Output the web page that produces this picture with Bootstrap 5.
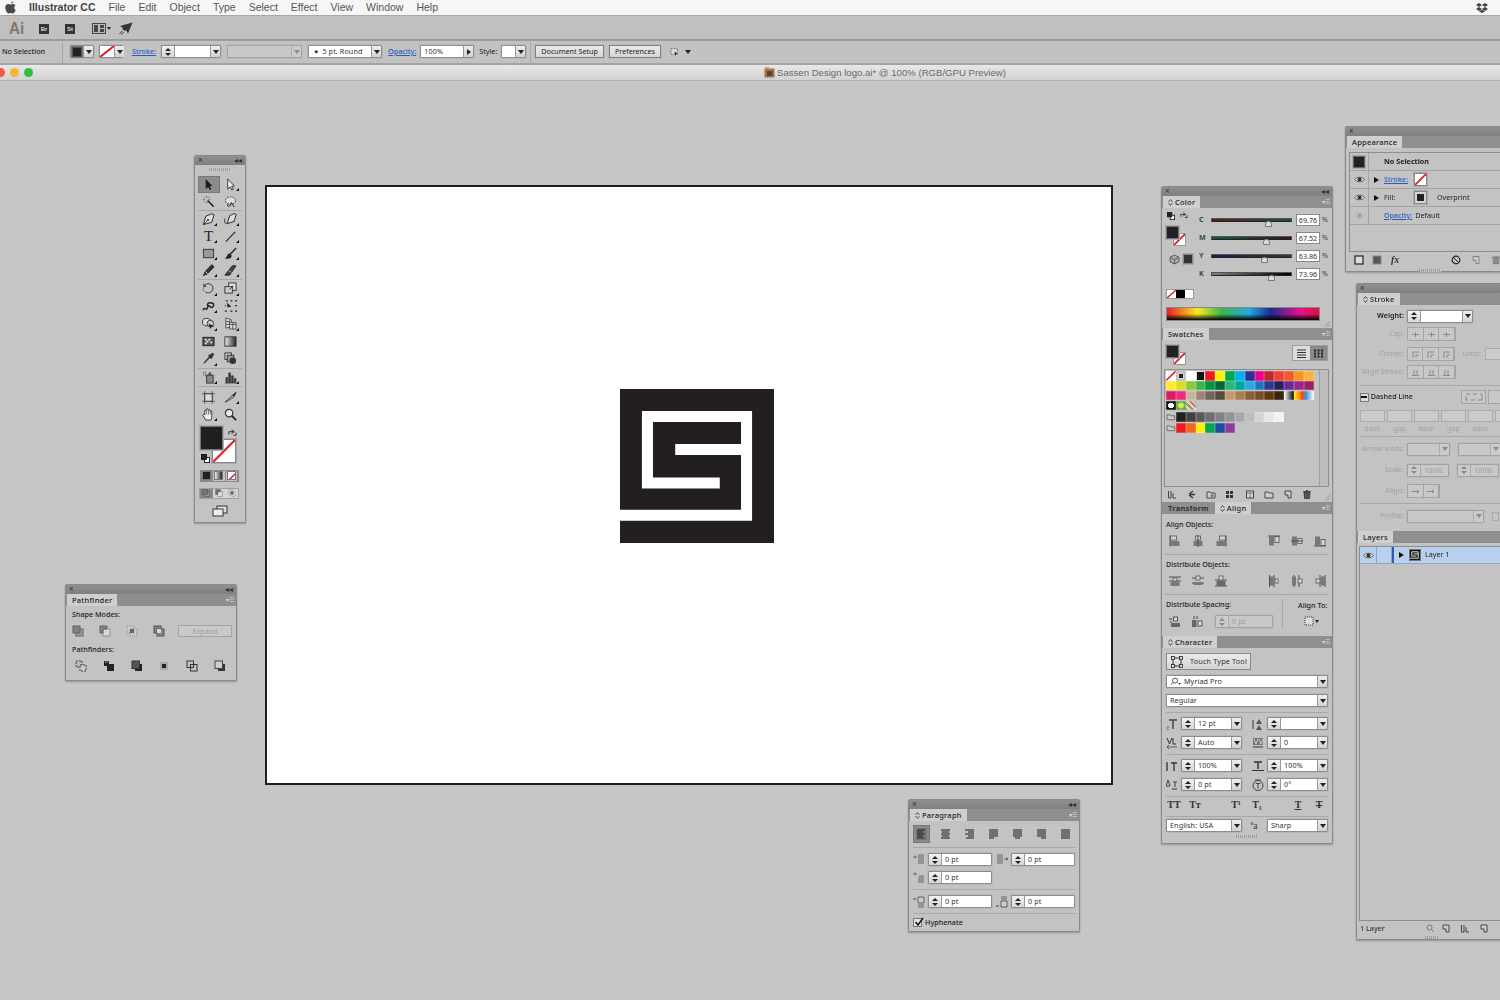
<!DOCTYPE html>
<html lang="en"><head><meta charset="utf-8"><title>Illustrator CC</title>
<link href="https://cdn.jsdelivr.net/npm/bootstrap@5.3.0/dist/css/bootstrap.min.css" rel="stylesheet">
<style>
html,body{margin:0;width:1500px;height:1000px;overflow:hidden;background:#c6c6c6}
body{font-family:"Noto Sans","Liberation Sans",sans-serif;font-size:7.2px;color:#333;line-height:1}
.shell{width:1500px;height:1000px;filter:blur(.42px)}
svg{display:block;overflow:visible}
.menubar{height:15px;background:#f6f6f6;font:10.5px/15px "Liberation Sans",sans-serif;color:#555}
.apple{margin-left:5px;margin-right:13px;width:11px;height:13px}
.appname{font-weight:700;color:#444;margin-right:13px}
.mi{margin-right:13px}
.dbx{margin-left:auto;margin-right:12px}
.appbar{height:26px;background:#c0c0c0;border-top:1px solid #a8a8a8;border-bottom:2px solid #9c9c9c;padding-top:2px}
.ailogo{font:700 17px/21px "Liberation Sans",sans-serif;color:#82766a;margin-left:9px;width:14px;transform:scaleX(.9);transform-origin:left}
.bridge{width:10px;height:10px;background:#333;color:#ddd;font:700 6px/10px "Liberation Sans",sans-serif;text-align:center}
.s2{margin-left:16px}.s3{margin-left:17px}.s4{margin-left:8px}
.ctrl{height:24px;background:#c2c2c2;border-bottom:2px solid #a4a4a4;padding-top:4px}
.nosel{width:62px;padding-left:2px;font-weight:500;color:#222;line-height:13px}
.vsep{width:1px;height:22px;margin-top:-3px;background:#a8a8a8}
.sw{width:13px;height:12px;background:#222;border:1px solid #777;box-shadow:inset 0 0 0 1px #555}
.lnk{color:#2b5cc4;text-decoration:underline;text-underline-offset:1px;font-weight:500}
.lbt{line-height:13px}
.lbl{color:#222}
.cmb{display:flex;height:13px;border:1px solid #8c8c8c;background:#fff;box-shadow:0 0 0 1px #b8b8b8;border-radius:1px;flex:none}
.spn{width:13px;flex:none;background:linear-gradient(#f2f2f2,#d6d6d6);border-right:1px solid #999;display:flex;flex-direction:column;justify-content:center;gap:2px;align-items:center}
.spn::before{content:"";border:3px solid transparent;border-top:0;border-bottom:3px solid #222}
.spn::after{content:"";border:3px solid transparent;border-bottom:0;border-top:3px solid #222}
.arw{width:10px;flex:none;background:linear-gradient(#eee,#d2d2d2);border-left:1px solid #999;display:flex;align-items:center;justify-content:center;margin-left:auto}
.arw::after{content:"";border:3px solid transparent;border-bottom:0;border-top:4px solid #222}
.arr{width:10px;flex:none;background:linear-gradient(#eee,#d2d2d2);border-left:1px solid #999;display:flex;align-items:center;justify-content:center;margin-left:auto}
.arr::after{content:"";border:3px solid transparent;border-right:0;border-left:4px solid #222}
.val{padding-left:3px;line-height:11px;color:#333;white-space:nowrap;letter-spacing:.1px}
.off{background:#c8c8c8;border-color:#a2a2a2;box-shadow:0 0 0 1px #bcbcbc}
.off .val{color:#9c9c9c}.off .spn,.off .arw{background:#cbcbcb;border-color:#ababab}
.off .arw::after{border-top-color:#8a8a8a}.off .spn::before{border-bottom-color:#8a8a8a}.off .spn::after{border-top-color:#8a8a8a}
.c24{width:24px}.c25{width:25px}.c60{width:60px}.c61{width:61px}.c43{width:43px}.c75{width:75px}.c74{width:74px}.c54{width:54px}.c77{width:77px}.c42{width:42px}
.pbtn{height:13px;border:1px solid #808080;background:linear-gradient(#eaeaea,#d6d6d6);box-shadow:0 0 0 1px #bbb;line-height:11px;padding:0 5px;color:#222;white-space:nowrap}
.g1{margin-left:7px}.g2{margin-left:5px}.g3{margin-left:6px}.g4{margin-left:4px}.g5{margin-left:9px}.g7{margin-left:8px}
.tolb{margin-top:1px}
.doc{height:16px;background:linear-gradient(#e8e8e8,#d2d2d2);border-bottom:1px solid #b0b0b0;position:relative;font:9.6px/15px "Liberation Sans",sans-serif;color:#6a6a6a}
.dots{position:absolute;left:-4px;top:3px;display:flex;gap:5px}
.dot{width:9px;height:9px;border-radius:50%;background:#ee5a50}
.d2{background:#f5b52e}.d3{background:#2dc03e}
.doctitle{margin-left:764px;gap:2px}
.arwi{display:block;margin-top:5px;border:3px solid transparent;border-bottom:0;border-top:4px solid #222;width:0;height:0}
.desk{position:relative;height:919px;background:#c6c6c6}
.board{position:absolute;left:265px;top:104px;width:848px;height:600px;background:#fff;border:2px solid #1e1e1e;display:flex;align-items:center;justify-content:center}
.logo{width:154px;height:154px;margin-top:-38px;margin-left:16px}
.pan{position:absolute;background:#c3c3c3;border:1px solid #8a8a8a;box-shadow:0 1px 2px rgba(0,0,0,.25);border-radius:2px 2px 0 0}
.ttl{height:9px;background:linear-gradient(#8f8f8f,#808080);color:#333;font-size:8px;line-height:8px;padding:0 3px;display:flex;justify-content:space-between}
.tabs{height:12px;background:#8f8f8f;display:flex;position:relative}
.tabs::after{content:"▾☰";position:absolute;right:2px;top:2px;font-size:6px;color:#ddd;line-height:8px}
.tb{background:#cfcfcf;padding:0 5px;line-height:12px;font-weight:500;color:#222;white-space:nowrap;margin-left:1px;letter-spacing:.25px;font-size:7.5px;display:inline-flex;align-items:center;gap:2px}
.tb svg{width:5px;height:7px;flex:none}
.tbd{background:#8f8f8f;color:#333;font-weight:700}
.pan-tools{left:194px;top:74px;width:52px;height:368px}
.pan-path{left:65px;top:503px;width:172px;height:97px}
.pan-right{left:1161px;top:105px;width:172px;height:658px}
.pan-app{left:1345px;top:45px;width:170px;height:146px}
.pan-stroke{left:1356px;top:202px;width:160px;height:657px}
.pan-para{left:908px;top:718px;width:172px;height:133px}
.grip{height:3px;width:22px;margin:3px auto 0;background:repeating-linear-gradient(90deg,#9a9a9a 0 1px,#c8c8c8 1px 2px)}
.tgroup{display:grid;grid-template-columns:22px 22px;grid-auto-rows:17px;justify-content:center;margin-right:1px}
.cell{position:relative;display:flex;align-items:center;justify-content:center;color:#222}
.cell svg{width:13px;height:13px}
.fly::after{content:"";position:absolute;right:3px;bottom:2px;border:0 solid transparent;border-width:0 0 3px 3px;border-bottom-color:#111}
.act{background:#8c8c8c;box-shadow:inset 0 0 0 1px #777}
.tt{font:400 15px/13px "Liberation Serif",serif;color:#222}
.tsep{height:1px;background:#a8a8a8;margin:0 3px}
.tg0{margin-top:5px}.tg3{grid-auto-rows:17.5px}.tg5{margin-top:2px}
.proxy{position:relative;height:44px;margin:3px 0 0 5px}
.pf{position:absolute;left:0;top:0;width:23px;height:24px;background:#1f1f1f;border:1px solid #777;box-shadow:0 0 0 1px #aaa;z-index:2}
.ps{position:absolute;left:12px;top:13px;width:24px;height:24px;background:#fff;border:1px solid #888;box-shadow:0 0 0 1px #aaa;z-index:1;overflow:hidden}
.ps svg,.sn svg{width:100%;height:100%}
.swp{position:absolute;left:28px;top:3px;width:9px;height:9px}
.dflt{position:absolute;left:1px;top:28px;width:9px;height:9px;z-index:3}
.trio{display:flex;margin:0 0 0 5px;width:39px;height:12px;border:1px solid #8a8a8a}
.trio span{flex:1;border-right:1px solid #8a8a8a;display:flex;align-items:center;justify-content:center}
.tm1{background:#888}
.trio i{display:block;width:9px;height:9px;background:#1f1f1f;border:1px solid #777}
.trio .i2{background:linear-gradient(90deg,#eee,#222)}
.trio .i3{background:#fff;position:relative;overflow:hidden}
.duo{display:flex;margin:6px 0 0 4px;width:40px;height:11px;border:1px solid #a0a0a0;background:#d4d4d4}
.duo span{flex:1;display:flex;align-items:center;justify-content:center}
.duo svg{width:8px;height:8px}
.sm{margin:6px auto 0;width:16px;height:12px}
.ic{width:12px;height:12px;flex:none}
.pf-body{padding:0 0 0 6px;font-weight:500}
.pf-lbl{margin-top:4px;color:#222;line-height:8px}
.pf-lbl2{margin-top:7px}
.modes{display:flex;align-items:center;height:14px;margin-top:6px;padding-left:6px}
.modes svg{margin-right:15px;opacity:.85}
.expand{width:54px;height:12px;margin-left:-2px;border:1px solid #a4a4a4;background:#c9c9c9;color:#a0a0a0;text-align:center;line-height:10px}
.finders{display:flex;justify-content:space-between;width:151px;margin:7px 0 0 9px}
/* colour */
.colbody{height:120px;position:relative}
.slr{display:grid;grid-template-columns:16px 81px 4px 24px 8px;align-items:center;height:18px;margin-left:33px;font-weight:700;color:#444}
.slbl{padding-left:4px}
.slr .fv{background:#fff;border:1px solid #888;height:12px;width:24px;font-weight:400;line-height:10px;text-align:center;color:#333}
.slr .pc{padding-left:2px;font-weight:400}
.trk{height:4px;border:1px solid #555;border-bottom-color:#222;position:relative;display:block}
.trk::after{content:"";position:absolute;top:2px;width:7px;height:6px;margin-left:-3px;background:#ddd;border:1px solid #777;border-radius:3px 3px 0 0}
.trk-c{background:linear-gradient(90deg,#5a1c14,#1d4f50)}
.trk-m{background:linear-gradient(90deg,#0d5c40,#3b1020)}
.trk-y{background:linear-gradient(90deg,#181868,#3d3d10)}
.trk-k{background:linear-gradient(90deg,#808080,#000)}
.t1::after{left:56px}.t2::after{left:54px}.t3::after{left:52px}.t4::after{left:59px}
.slrs{position:absolute;left:0;top:3px;width:100%}
.minis{position:absolute;left:4px;top:4px;width:40px;height:64px}
.ms1{position:absolute;left:1px;top:0;width:8px;height:8px}.ms2{position:absolute;left:14px;top:0;width:8px;height:8px}
.mf{position:absolute;left:0;top:14px;width:13px;height:13px;background:#222;border:1px solid #777;box-shadow:0 0 0 1px #aaa;z-index:2}
.mst{position:absolute;left:7px;top:21px;width:13px;height:13px;background:#fff;border:1px solid #999;z-index:1;overflow:hidden}
.cube{position:absolute;left:4px;top:43px;width:9px;height:9px}
.msq{position:absolute;left:17px;top:42px;width:10px;height:10px;background:#333;border:1px solid #888;box-shadow:0 0 0 1px #aaa}
.strip{position:absolute;left:4px;top:81px;width:28px;height:10px;border:1px solid #999;display:flex;background:#fff}
.strip i{flex:1;display:block}
.st-k{background:#000}.st-w{background:#fff}.st-n{background:#fff}
.spec{position:absolute;left:4px;top:99px;width:154px;height:14px;border:1px solid #888;background:linear-gradient(#fff0,#fff0 50%,#000),linear-gradient(90deg,#e8202a,#f7ea1e 20%,#3cb54a 36%,#25aae1 54%,#1b2c93 68%,#e7118b 88%,#d8153b)}
.corner{position:absolute;right:2px;bottom:1px;width:7px;height:7px;background:linear-gradient(135deg,transparent 50%,#9a9a9a 50%,#9a9a9a 60%,transparent 60%,transparent 72%,#9a9a9a 72%,#9a9a9a 82%,transparent 82%)}
/* swatches */
.swbody{height:162px;position:relative}
.sfill{position:absolute;left:4px;top:5px;width:13px;height:13px;background:#222;border:1px solid #777;box-shadow:0 0 0 1px #aaa;z-index:2}
.sstk{position:absolute;left:11px;top:12px;width:13px;height:13px;background:#fff;border:1px solid #999;overflow:hidden}
.vbtn{position:absolute;left:130px;top:5px;width:36px;height:16px;border:1px solid #9c9c9c;display:flex;background:#ddd}
.vbtn span{flex:1;display:flex;align-items:center;justify-content:center}
.vbtn .on{background:#8a8a8a}
.vbtn svg{width:11px;height:11px}
.swl{position:absolute;left:2px;top:29px;width:165px;height:118px;border:1px solid #8f8f8f;display:flex}
.swg{flex:1;padding:1px 0 0 1px}
.scr{width:9px;background:#bcbcbc;border-left:1px solid #9f9f9f}
.srw{display:flex;height:9.8px;margin-bottom:.1px}
.srw i{display:block;width:9.85px;height:9.6px;flex:none;box-shadow:inset 0 0 0 .5px rgba(255,255,255,.35)}
.sg{margin-top:1.5px}
.fold{display:block;width:9.85px;height:9.6px;flex:none}
.swb{position:absolute;left:0;bottom:3px;width:100%;display:flex;padding:0 20px 0 6px;justify-content:space-between}
.swb svg{width:10px;height:9px}
/* align */
.albody{height:122px;padding:5px 4px 0}
.al-l{font-weight:500;color:#222;line-height:10px;white-space:nowrap}
.al-i{display:flex;height:14px;margin-top:6px;padding:0 2px 0 3px;justify-content:space-between}
.al-i svg{width:12px;height:12px;opacity:.8}
.sp1{margin-right:30px}
.al-s{height:1px;background:#a8a8a8;margin:5px 0 4px -1px}
.dsp{display:flex}
.dspl{width:117px;border-right:1px solid #a8a8a8;height:30px}
.dspr{padding:1px 0 0 15px}
.dsr{display:flex;align-items:center;margin-top:6px;padding-left:3px;gap:10px}
.dsr .cmb{width:58px;margin-left:2px}
.ato{margin:5px 0 0 5px}
/* char */
.chbody{height:195px;padding:5px 4px 0}
.tbtn{display:flex;align-items:center;gap:7px;width:85px;height:17px;border:1px solid #8a8a8a;background:linear-gradient(#eaeaea,#d4d4d4);padding-left:4px;color:#333;letter-spacing:.2px;white-space:nowrap}
.tbtn svg{width:12px;height:12px}
.frow{margin-top:5px;width:162px}
.frow2{margin-top:6px}
.frow .val{padding-left:3px;display:flex;align-items:center}
.frow svg{width:11px;height:9px;margin-right:3px}
.hsep{height:1px;background:#a8a8a8;margin:5px 0 4px}
.cr{display:flex;align-items:center;height:13px;margin-top:6px}
.cr .cmb{width:61px}
.cr svg.ci{width:12px;height:12px;flex:none}
.cr .ca{margin-left:3px}
.cr .cb{margin-left:10px}
.cr.first{margin-top:0}
.tsrow{display:flex;height:12px;margin:-2px 0 0 -2px;align-items:center;font:700 10px/12px "Liberation Serif",serif;color:#333}
.tsrow span{width:20px;text-align:center;flex:none}
.tsn{margin-left:1px}.tsw{margin-left:21px}
.lang{display:flex;align-items:center;margin-top:-2px}
.lang .cmb{width:76px}.lang .c61{width:61px}
.aa{width:20px;margin-left:2px;margin-right:3px;text-align:center;font:10px/12px "Liberation Serif",serif;color:#444}
/* appearance */
.apl{margin:4px 0 0 3px;height:100px;border:1px solid #8f8f8f;border-right:0}
.apr{display:flex;align-items:center;height:18px;border-bottom:1px solid #a4a4a4;color:#222}
.apc{width:19px;height:100%;flex:none;border-right:1px solid #a4a4a4;display:flex;align-items:center;justify-content:center}
.apc svg{width:11px;height:7px}
.ape{width:15px;flex:none;display:flex;justify-content:center}
.tri{border:3px solid transparent;border-right:0;border-left:5px solid #111;width:0;height:0;display:block}
.apsw{width:13px;height:13px;border:1px solid #888;background:#d4d4d4;display:flex;align-items:center;justify-content:center;flex:none;box-shadow:0 0 0 1px #aaa}
.apsw i{display:block;width:7px;height:7px;background:#222}
.apsn{background:#fff;overflow:hidden}
.w30{width:30px}.ml3{margin-left:3px}.ml10{margin-left:10px}
.nosl{padding-left:15px;font-weight:700}
.apsq{width:12px;height:12px;background:#222;border:1px solid #666;box-shadow:0 0 0 1px #aaa;margin:auto}
.apb{display:flex;align-items:center;margin-top:1px;height:13px;padding-left:8px}
.apb svg{width:10px;height:10px}
.apb .m1{margin-left:8px}.apb .m2{margin-left:10px}.apb .m3{margin-left:51px}
.fx{font:italic 700 10px "Liberation Serif",serif;margin-left:9px;width:9px}
/* stroke */
.stbody{height:226px;padding:4px 0 0 3px}
.sr{display:flex;align-items:center;height:14px;margin-top:4px}
.sr0{margin-top:0}.sr5{margin-top:5px}.sr6{margin-top:6px}.sr7{margin-top:7px}
.srl{width:47px;text-align:right;padding-right:3px;color:#a0a0a0;flex:none;white-space:nowrap}
.srd{color:#222;font-weight:600}
.btg{display:flex;width:49px;height:14px;border:1px solid #a4a4a4}
.btg span{flex:1;border-right:1px solid #a4a4a4;display:flex;align-items:center;justify-content:center;background:#c8c8c8}
.btg svg{width:9px;height:9px}
.btg2{width:33px}
.wcmb{width:66px}
.ssep{height:1px;background:#a8a8a8}
.ss6{margin-top:6px}.ss4{margin-top:4px}.ss5{margin-top:5px}
.dl{display:flex;align-items:center;height:14px;margin-top:4px}
.chk{width:9px;height:9px;background:#ddd;border:1px solid #777;display:flex;align-items:center;justify-content:center;margin-right:2px}
.chk::after{content:"";width:6px;height:1.5px;background:#111}
.dlt{width:95px;font-weight:500;color:#222}
.dbtn{width:26px;height:14px;border:1px solid #a4a4a4;background:#c8c8c8;margin-right:2px;display:flex;align-items:center;justify-content:center}
.dbtn svg{width:18px;height:8px}
.dfs{display:flex;gap:2px;margin-top:6px}
.dfs span{display:block;width:25px;height:12px;background:#cbcbcb;border:1px solid #aaa;flex:none}
.dls{display:flex;gap:2px;margin-top:2px;line-height:8px}
.dls span{display:block;width:25px;text-align:center;color:#a0a0a0;flex:none}
.ar2{margin-left:8px}
.ic9{width:7px;height:9px;margin-left:8px;border:1px solid #aaa}
.lim{margin-left:7px;width:23px;color:#a0a0a0;white-space:nowrap}
.limf{width:30px;height:12px;background:#cbcbcb;border:1px solid #aaa;flex:none}
.lbody{height:397px;padding-top:3px}
.lyl{height:375px;margin:0 0 0 2px;border:1px solid #8f8f8f;border-width:1px 0 1px 1px;width:200px}
.lyr{display:flex;align-items:center;height:17px;background:#b8cfee;border-bottom:1px solid #8fa5c4;color:#222}
.lyc{width:17px;height:100%;border-right:1px solid #8fa5c4;display:flex;align-items:center;justify-content:center;flex:none}
.lyc2{width:15px}
.lyc svg{width:11px;height:7px}
.lyb{width:2px;height:100%;background:#2c5bb0;flex:none}
.lyth{width:12px;height:12px;background:#111;border:1px solid #777;flex:none;display:block}
.lyth svg{width:10px;height:10px}
.lyt2{width:15px;flex:none;display:flex;justify-content:center}
.lyn{margin-left:4px}
.lyf{display:flex;align-items:center;margin-top:1px;height:13px;padding-left:3px;font-weight:500}
.lyf svg{width:10px;height:9px;margin-left:6px}
.lyf .m10{margin-left:10px}.lyf .m8{margin-left:8px}
.lyf span{width:59px}
.grip2{height:3px;width:14px;margin:1px 0 0 68px;background:repeating-linear-gradient(90deg,#9a9a9a 0 1px,#c8c8c8 1px 2px)}
/* para */
.pabody{padding:4px 4px 0}
.pal{display:flex;justify-content:space-between;height:18px;align-items:center;width:161px}
.pal span{width:17px;height:18px;display:flex;align-items:center;justify-content:center}
.pal .on{background:#8a8a8a;box-shadow:inset 0 0 0 1px #777}
.pal svg{width:11px;height:12px}
.par{display:flex;align-items:center;height:13px;margin-top:5px}
.par svg{width:12px;height:12px;flex:none}
.par .cmb{width:64px;margin-left:3px}
.par .ii{margin-left:4px}
.hy{display:flex;align-items:center;margin-top:4px;font-weight:500;color:#222}
.ck{width:9px;height:9px;background:#e4e4e4;border:1px solid #777;margin-right:3px;position:relative}
.ck svg{position:absolute;left:0;top:-2px;width:10px;height:10px}
.sepa{height:1px;background:#a8a8a8;margin:4px 0 0}
.sepb{margin-top:5px}
/* swatches colours */
.sn{background:#fff}.c-reg{background:radial-gradient(#222 30%,#ddd 32%,#bbb 60%)}.c-wh{background:#fff}.c-bk{background:#111;box-shadow:inset 0 0 0 1px #ddd!important}
.x1{background:#ed1c24}.x2{background:#fff200}.x3{background:#00a651}.x4{background:#00aeef}.x5{background:#2e3192}.x6{background:#ec008c}.x7{background:#c1272d}.x8{background:#ef4136}.x9{background:#f15a29}.x10{background:#f7941d}.x11{background:#fbb040}
.y1{background:#f9ed32}.y2{background:#d7df23}.y3{background:#8dc63f}.y4{background:#39b54a}.y5{background:#009444}.y6{background:#006838}.y7{background:#2bb673}.y8{background:#00a79d}.y9{background:#27aae1}.y10{background:#1c75bc}.y11{background:#2b3990}.y12{background:#262262}.y13{background:#662d91}.y14{background:#92278f}.y15{background:#9e1f63}
.z1{background:#da1c5c}.z2{background:#ee2a7b}.z3{background:#c2b59b}.z4{background:#9b8579}.z5{background:#726658}.z6{background:#594a42}.z7{background:#c49a6c}.z8{background:#a97c50}.z9{background:#8b5e3c}.z10{background:#754c29}.z11{background:#603913}.z12{background:#3c2415}.z13{background:linear-gradient(90deg,#fff,#000)}.z14{background:linear-gradient(90deg,#fff200,#f7941d,#ed1c24)}.z15{background:linear-gradient(90deg,#1c75bc,#fff)}
.p1{background:radial-gradient(#fff 40%,#111 42%)}.p2{background:radial-gradient(#d8e86a 30%,#5aa832 60%)}.p3{background:repeating-linear-gradient(45deg,#a98a6a 0 2px,#e3d5c2 2px 4px)}
.g-1{background:#231f20}.g-2{background:#414042}.g-3{background:#58595b}.g-4{background:#6d6e71}.g-5{background:#808285}.g-6{background:#939598}.g-7{background:#a7a9ac}.g-8{background:#bcbec0}.g-9{background:#d1d3d4}.g-10{background:#e6e7e8}.g-11{background:#f1f2f2}
.b-1{background:#ed1c24}.b-2{background:#f26522}.b-3{background:#fff200}.b-4{background:#00a651}.b-5{background:#1b4ea3}.b-6{background:#8e3a9d}
</style></head><body>
<svg width="0" height="0" class="position-absolute"><defs>
<symbol id="ud" viewBox="0 0 5 7"><path d="M.5 3 2.500 .5 4.500 3M.5 4 2.500 6.500 4.500 4" fill="none" stroke="#333" stroke-width=".8"/></symbol>
<symbol id="sel" viewBox="0 0 14 14"><path d="M4 1V12L6.600 9.600 8.500 13 10 12.200 8.200 8.900 11.200 8.600Z" fill="#1c1c1c"/></symbol>
<symbol id="dsel" viewBox="0 0 14 14"><path d="M4 1V12L6.600 9.600 8.500 13 10 12.200 8.200 8.900 11.200 8.600Z" fill="#eee" stroke="#222" stroke-width=".9"/></symbol>
<symbol id="wand" viewBox="0 0 14 14"><path d="M6 6 12.500 12.500" stroke="#222" stroke-width="1.600"/><path d="M5 1V3M5 7V9M1 5H3M7 5H9M2 2 3 3M7 7 8 8M2 8 3 7M8 2 7 3" stroke="#444" stroke-width=".8"/></symbol>
<symbol id="lasso" viewBox="0 0 14 14"><ellipse cx="7" cy="6" rx="5.500" ry="4" fill="#ddd" stroke="#333" stroke-dasharray="2 1"/><path d="M4 10C3 12 5 13 6 12L8 8 11 13" stroke="#222" fill="none"/></symbol>
<symbol id="pen" viewBox="0 0 14 14"><path d="M13 2 10.500 .8 4 3.500 1.500 12.500 10.500 10Z" fill="#ddd" stroke="#222"/><path d="M1.500 12.500 6 8" stroke="#222"/><circle cx="6.500" cy="7.500" r="1" fill="#222"/></symbol>
<symbol id="penp" viewBox="0 0 14 14"><path d="M13 1.500 11 .5 6 3 3.500 11.500 11 9Z" fill="#ddd" stroke="#222"/><path d="M3.500 11.500C1 12 0 9 1 6" stroke="#222" fill="none"/></symbol>
<symbol id="line" viewBox="0 0 14 14"><path d="M2 12.500 12 2" stroke="#222" stroke-width="1.200"/></symbol>
<symbol id="rect" viewBox="0 0 14 14"><rect x="1.500" y="2.500" width="11" height="9" fill="#999" stroke="#333"/></symbol>
<symbol id="brush" viewBox="0 0 14 14"><path d="M13 1 6.500 8" stroke="#222" stroke-width="1.500"/><path d="M6 7C3 7 4 11 1 12 5 13.500 9 12 8 9Z" fill="#222"/></symbol>
<symbol id="pencil" viewBox="0 0 14 14"><path d="M13 3 10.500 .8 3.500 8 1.500 12.500 6 10.500Z" fill="#333" stroke="#222"/><path d="M3.500 8 6 10.500" stroke="#ddd"/></symbol>
<symbol id="eraser" viewBox="0 0 14 14"><path d="M9 2H13L6 12H1Z" fill="#444" stroke="#222"/><path d="M5 7 8 9" stroke="#bbb"/></symbol>
<symbol id="rot" viewBox="0 0 14 14"><path d="M3 3.500A5 5 0 1 1 3.500 10.500" fill="none" stroke="#333"/><path d="M2 10A5 5 0 0 1 2 5" fill="none" stroke="#333" stroke-dasharray="1 1"/><path d="M1.500 1.500V5H5Z" fill="#333"/></symbol>
<symbol id="scale" viewBox="0 0 14 14"><rect x="5" y="1" width="8" height="8" fill="#ddd" stroke="#333"/><rect x="1" y="5" width="8" height="7" fill="#ccc" stroke="#333"/><path d="M6 8 10 4" stroke="#222"/></symbol>
<symbol id="warp" viewBox="0 0 14 14"><path d="M1 11C3 6 5 13 6 8S10 11 12 7 10 3 8 3 5 6 7 7" fill="none" stroke="#222" stroke-width="1.600"/></symbol>
<symbol id="free" viewBox="0 0 14 14"><path d="M3 3 8 7 4 8Z" fill="#222"/><path d="M2 1H4M7 1H9M12 1H14M1 6H2M12 6H14M1 12H3M7 12H9M12 12H14" stroke="#222" stroke-width="1.400"/></symbol>
<symbol id="shb" viewBox="0 0 14 14"><ellipse cx="5" cy="5.500" rx="4.500" ry="4" fill="#ddd" stroke="#333"/><circle cx="9" cy="7" r="3.500" fill="#ccc" stroke="#333"/><path d="M7 7 13 10 10 11 9 13Z" fill="#222"/></symbol>
<symbol id="per" viewBox="0 0 14 14"><path d="M2 1 8 3V6H13V13H6V11L2 12ZM2 4.500 8 6M2 8H13M6 3V13M9.500 6V13" fill="#ddd" stroke="#333" stroke-width=".8"/></symbol>
<symbol id="mesh" viewBox="0 0 14 14"><rect x="1" y="2.500" width="12" height="9" fill="#555" stroke="#222"/><path d="M3 4H5V6H3ZM7 4H9V6H7ZM5 6H7V8H5ZM9 7H11V9H9ZM3 8H5V10H3Z" fill="#eee"/></symbol>
<symbol id="grad" viewBox="0 0 14 14"><defs><linearGradient id="gr"><stop offset="0" stop-color="#eee"/><stop offset="1" stop-color="#222"/></linearGradient></defs><rect x="1" y="2" width="12" height="10" fill="url(#gr)" stroke="#333"/></symbol>
<symbol id="drop" viewBox="0 0 14 14"><path d="M12.500 1.500C11 .5 10 1.500 9 3L8 2.500 6.500 4 7.500 5 2 11 1.500 12.500 3 12 8.500 6.500 10 7.500 11.500 6 11 5C12.500 4 13.500 3 12.500 1.500Z" fill="#333"/></symbol>
<symbol id="blend" viewBox="0 0 14 14"><rect x="1" y="1" width="7" height="7" fill="#ccc" stroke="#333"/><rect x="3.500" y="3.500" width="7" height="7" fill="#999" stroke="#333"/><circle cx="9.500" cy="9.500" r="3.500" fill="#333"/></symbol>
<symbol id="spray" viewBox="0 0 14 14"><rect x="5" y="4.500" width="7" height="8.500" fill="#888" stroke="#333"/><rect x="7" y="1.500" width="3" height="3" fill="#555"/><path d="M1 2H2M1 4H2M3 1H4M3 3H4M3 5H4" stroke="#333"/></symbol>
<symbol id="graph" viewBox="0 0 14 14"><path d="M1 13H13M2 13V7H4V13ZM5 13V2H7V13ZM8 13V5H10V13ZM11 13V8H13V13Z" fill="#333" stroke="#333" stroke-width=".5"/></symbol>
<symbol id="art" viewBox="0 0 14 14"><path d="M3 0V14M11 0V14M0 3H14M0 11H14" stroke="#444" stroke-width=".8"/><rect x="3" y="3" width="8" height="8" fill="#ddd" stroke="#333"/></symbol>
<symbol id="slice" viewBox="0 0 14 14"><path d="M1 12 9 5 13 1 11 6 5 10Z" fill="#ddd" stroke="#333"/><path d="M8 5 13 1 11 6Z" fill="#333"/></symbol>
<symbol id="hand" viewBox="0 0 14 14"><path d="M4 13 1 8C.5 7 2 6 3 7.500V3C3 2 4.500 2 4.500 3V1.500C4.500 .5 6.500 .5 6.500 1.500V2.500C6.500 1.500 8.500 1.500 8.500 2.500V3.500C8.500 2.500 10.500 2.500 10.500 3.500V9C10.500 11 10 13 9.500 13Z" fill="#eee" stroke="#222" stroke-width=".9"/><path d="M5 3.500V7M7 3V7M9 3.500V7" stroke="#222" stroke-width=".6"/></symbol>
<symbol id="zoom" viewBox="0 0 14 14"><circle cx="5.500" cy="5.500" r="4" fill="#eee" stroke="#333" stroke-width="1.300"/><path d="M8.500 8.500 13 13" stroke="#222" stroke-width="2"/></symbol>
<symbol id="swap" viewBox="0 0 10 10"><path d="M1 6V3H6M4 1 7 3 4 5M9 4V7H6" fill="none" stroke="#222"/></symbol>
<symbol id="def" viewBox="0 0 10 10"><rect x="4" y="4" width="5.500" height="5.500" fill="#fff" stroke="#111"/><rect x=".5" y=".5" width="5.500" height="5.500" fill="#222" stroke="#111"/></symbol>
<symbol id="slash" viewBox="0 0 20 20" preserveAspectRatio="none"><path d="M0 20 20 0" stroke="#e0202a" stroke-width="3.400"/></symbol>
<symbol id="slashb" viewBox="0 0 20 20" preserveAspectRatio="none"><path d="M0 20 20 0" stroke="#e0202a" stroke-width="2"/></symbol>
<symbol id="eye" viewBox="0 0 11 7"><path d="M.5 3.500C3 .5 8 .5 10.500 3.500 8 6.500 3 6.500 .5 3.500Z" fill="#ddd" stroke="#333" stroke-width=".7"/><circle cx="5.500" cy="3.500" r="2" fill="#333"/></symbol>
<symbol id="fold" viewBox="0 0 10 10"><path d="M1 8V3H4L5 4H9V8Z" fill="#ccc" stroke="#444" stroke-width=".7"/></symbol>
<symbol id="ov1" viewBox="0 0 12 12"><rect x="4" y="4" width="7" height="7" fill="#999" stroke="#555"/><rect x="1" y="1" width="7" height="7" fill="#777" stroke="#555"/></symbol>
<symbol id="ov2" viewBox="0 0 12 12"><rect x="4" y="4" width="7" height="7" fill="#ddd" stroke="#888"/><path d="M1 1H8V4H4V8H1Z" fill="#777" stroke="#555"/></symbol>
<symbol id="ov3" viewBox="0 0 12 12"><rect x="1" y="1" width="7" height="7" fill="#ccc" stroke="#888" stroke-dasharray="1 1"/><rect x="4" y="4" width="7" height="7" fill="#ccc" stroke="#888" stroke-dasharray="1 1"/><rect x="4" y="4" width="4" height="4" fill="#555"/></symbol>
<symbol id="ov4" viewBox="0 0 12 12"><rect x="1" y="1" width="7" height="7" fill="#777" stroke="#444"/><rect x="4" y="4" width="7" height="7" fill="#777" stroke="#444"/><rect x="4" y="4" width="4" height="4" fill="#ddd"/></symbol>
<symbol id="pf1" viewBox="0 0 12 12"><rect x="1" y="1" width="6" height="6" fill="#bbb" stroke="#444" stroke-dasharray="2 1"/><rect x="5" y="5" width="6" height="6" fill="#ccc" stroke="#444" stroke-dasharray="2 1"/></symbol>
<symbol id="pf2" viewBox="0 0 12 12"><rect x="1" y="1" width="5" height="5" fill="#222"/><path d="M6 4H11V11H4V6H6Z" fill="#222"/><path d="M2 2H5" stroke="#999"/></symbol>
<symbol id="pf3" viewBox="0 0 12 12"><rect x="1" y="1" width="7.500" height="7.500" fill="#555" stroke="#333"/><path d="M9 4H11V11H4V9H9Z" fill="#222"/></symbol>
<symbol id="pf4" viewBox="0 0 12 12"><rect x="2" y="2" width="8" height="8" fill="#aaa"/><rect x="4" y="4" width="4" height="4" fill="#222"/></symbol>
<symbol id="pf5" viewBox="0 0 12 12"><rect x="1" y="1" width="6.500" height="6.500" fill="none" stroke="#333"/><rect x="4.500" y="4.500" width="6.500" height="6.500" fill="none" stroke="#333"/></symbol>
<symbol id="pf6" viewBox="0 0 12 12"><rect x="4" y="4" width="7" height="7" fill="#333"/><rect x="1" y="1" width="7.500" height="7.500" fill="#ccc" stroke="#444"/></symbol>
<symbol id="al1" viewBox="0 0 12 12"><rect x="1.500" y="1" width="6" height="4" fill="#ddd" stroke="#555"/><rect x="1.500" y="6" width="9" height="5" fill="#666"/><path d="M1 .5V11.500" stroke="#333"/></symbol>
<symbol id="al2" viewBox="0 0 12 12"><rect x="3.500" y="1" width="5" height="4" fill="#ddd" stroke="#555"/><rect x="1.500" y="6" width="9" height="5" fill="#666"/><path d="M6 0V12" stroke="#333"/></symbol>
<symbol id="al3" viewBox="0 0 12 12"><rect x="4.500" y="1" width="6" height="4" fill="#ddd" stroke="#555"/><rect x="1.500" y="6" width="9" height="5" fill="#666"/><path d="M11 .5V11.500" stroke="#333"/></symbol>
<symbol id="al4" viewBox="0 0 12 12"><rect x="1" y="1.500" width="5" height="9" fill="#666"/><rect x="7" y="1.500" width="4" height="6" fill="#ddd" stroke="#555"/><path d="M0 1H12" stroke="#333"/></symbol>
<symbol id="al5" viewBox="0 0 12 12"><rect x="1" y="1.500" width="5" height="9" fill="#666"/><rect x="7" y="3.500" width="4" height="5" fill="#ddd" stroke="#555"/><path d="M0 6H12" stroke="#333"/></symbol>
<symbol id="al6" viewBox="0 0 12 12"><rect x="1" y="1.500" width="5" height="9" fill="#666"/><rect x="7" y="4.500" width="4" height="6" fill="#ddd" stroke="#555"/><path d="M0 11H12" stroke="#333"/></symbol>
<symbol id="di1" viewBox="0 0 12 12"><path d="M0 2H12M0 6H12" stroke="#333"/><rect x="4" y="3" width="4" height="3" fill="#ddd" stroke="#555"/><rect x="1.500" y="7" width="9" height="4" fill="#666"/></symbol>
<symbol id="di2" viewBox="0 0 12 12"><path d="M0 3H12M0 8H12" stroke="#333"/><rect x="4" y="1" width="4" height="4" fill="#ddd" stroke="#555"/><rect x="1.500" y="7" width="9" height="3" fill="#666"/></symbol>
<symbol id="di3" viewBox="0 0 12 12"><path d="M0 5H12M0 11H12" stroke="#333"/><rect x="4" y="1" width="4" height="4" fill="#ddd" stroke="#555"/><rect x="1.500" y="6" width="9" height="5" fill="#555"/></symbol>
<symbol id="di4" viewBox="0 0 12 12"><path d="M1.500 0V12M6 0V12" stroke="#333"/><rect x="2" y="1.500" width="4" height="9" fill="#666"/><rect x="7" y="4" width="3" height="4" fill="#ddd" stroke="#555"/></symbol>
<symbol id="di5" viewBox="0 0 12 12"><path d="M3 0V12M8 0V12" stroke="#333"/><rect x="1" y="1.500" width="4" height="9" fill="#666"/><rect x="7" y="4" width="4" height="4" fill="#ddd" stroke="#555"/></symbol>
<symbol id="di6" viewBox="0 0 12 12"><path d="M6 0V12M11 0V12" stroke="#333"/><rect x="2" y="4" width="4" height="4" fill="#ddd" stroke="#555"/><rect x="7" y="1.500" width="4" height="9" fill="#666"/></symbol>
<symbol id="ds1" viewBox="0 0 12 12"><path d="M0 3H3M1 6H3" stroke="#444"/><rect x="4.500" y="1" width="4" height="4" fill="#ddd" stroke="#555"/><rect x="2" y="7" width="9" height="4" fill="#666"/></symbol>
<symbol id="ds2" viewBox="0 0 12 12"><path d="M3 0V3M6 0V3" stroke="#444"/><rect x="1" y="4" width="4.500" height="7" fill="#666"/><rect x="7" y="5" width="4" height="5" fill="#ddd" stroke="#555"/></symbol>
<symbol id="tol" viewBox="0 0 14 12"><rect x="2.500" y="2.500" width="8" height="7" fill="#ddd" stroke="#333" stroke-dasharray="1 1"/><path d="M7 6 11 9 8.500 9.500 8 12Z" fill="#222"/></symbol>
<symbol id="tt" viewBox="0 0 12 12"><rect x="2" y="2" width="8" height="8" fill="none" stroke="#333"/><rect x=".5" y=".5" width="3" height="3" fill="#ddd" stroke="#222" stroke-width=".8"/><rect x="8.500" y=".5" width="3" height="3" fill="#ddd" stroke="#222" stroke-width=".8"/><rect x=".5" y="8.500" width="3" height="3" fill="#ddd" stroke="#222" stroke-width=".8"/><rect x="8.500" y="8.500" width="3" height="3" fill="#ddd" stroke="#222" stroke-width=".8"/></symbol>
<symbol id="srch" viewBox="0 0 12 9"><circle cx="5.500" cy="3.500" r="2.800" fill="none" stroke="#444"/><path d="M3.500 5.500 1 8" stroke="#444"/><path d="M9 6H12L10.500 8Z" fill="#222"/></symbol>
<symbol id="cs1" viewBox="0 0 12 12"><path d="M1 12V9M1 12H4M1 9H4" stroke="#555" stroke-width=".6"/><path d="M3 2H11M7 2V11" stroke="#444" stroke-width="1.500"/></symbol>
<symbol id="cs2" viewBox="0 0 12 12"><path d="M7 1 4 6H10ZM7 7 4 12H10Z" fill="#555"/><path d="M1 2V11" stroke="#333"/></symbol>
<symbol id="cs3" viewBox="0 0 12 12"><path d="M1 1 3.500 7 6 1M7 1V7H10" stroke="#333" fill="none"/><path d="M1 10H11M3 8 1 10 3 12" stroke="#333" fill="none" stroke-width=".7"/></symbol>
<symbol id="cs4" viewBox="0 0 12 12"><rect x="1" y="1" width="10" height="7" fill="#777"/><path d="M2 2 4 7 6 2M7 2 9 7 11 2" stroke="#eee" fill="none" stroke-width=".7"/><path d="M1 10H11" stroke="#333"/></symbol>
<symbol id="cs5" viewBox="0 0 12 12"><path d="M1 2V11M5 3H11M8 3V11" stroke="#333" stroke-width="1.300"/></symbol>
<symbol id="cs6" viewBox="0 0 12 12"><path d="M2 2H10M6 2V9" stroke="#333" stroke-width="1.500"/><path d="M0 10.500H12" stroke="#333"/></symbol>
<symbol id="cs7" viewBox="0 0 12 12"><path d="M2 1 0 7H4ZM7 3H11M9 3V8" stroke="#444" stroke-width="1" fill="none"/><path d="M6 10H11" stroke="#333"/></symbol>
<symbol id="cs8" viewBox="0 0 12 12"><circle cx="6" cy="6.500" r="5" fill="none" stroke="#444"/><path d="M3.500 4.500H8.500M6 4.500V9.500" stroke="#444"/><path d="M3 1H9" stroke="#444"/></symbol>
<symbol id="pa1" viewBox="0 0 11 12"><rect width="11" height="12" fill="#777"/><path d="M1 2H9M1 4H7M1 6H9M1 8H7M1 10H8" stroke="#222" stroke-width="1.200"/></symbol>
<symbol id="pa2" viewBox="0 0 11 12"><path d="M1 2H10M2 4H9M1 6H10M2 8H9M1 10H10" stroke="#555" stroke-width="1.300"/></symbol>
<symbol id="pa3" viewBox="0 0 11 12"><path d="M1 2H10M4 4H10M1 6H10M4 8H10M2 10H10" stroke="#555" stroke-width="1.300"/></symbol>
<symbol id="pa4" viewBox="0 0 11 12"><path d="M1 2H10M1 4H10M1 6H10M1 8H10M1 10H6" stroke="#555" stroke-width="1.300"/></symbol>
<symbol id="pa5" viewBox="0 0 11 12"><path d="M1 2H10M1 4H10M1 6H10M1 8H10M3 10H8" stroke="#555" stroke-width="1.300"/></symbol>
<symbol id="pa6" viewBox="0 0 11 12"><path d="M1 2H10M1 4H10M1 6H10M1 8H10M5 10H10" stroke="#555" stroke-width="1.300"/></symbol>
<symbol id="pa7" viewBox="0 0 11 12"><path d="M1 2H10M1 4H10M1 6H10M1 8H10M1 10H10" stroke="#555" stroke-width="1.300"/></symbol>
<symbol id="pi1" viewBox="0 0 12 12"><path d="M0 3H3M2 1.500 3.500 3 2 4.500" stroke="#444" fill="none" stroke-width=".7"/><path d="M5 1H11M5 3H11M5 5H11M5 7H11M5 9H11" stroke="#666"/></symbol>
<symbol id="pi2" viewBox="0 0 12 12"><path d="M1 1H7M1 3H7M1 5H7M1 7H7M1 9H7" stroke="#666"/><path d="M8 5H12M10 3.500 12 5 10 6.500" stroke="#444" fill="none" stroke-width=".7"/></symbol>
<symbol id="pi3" viewBox="0 0 12 12"><path d="M0 2H3M2 .5 3.500 2 2 3.500" stroke="#444" fill="none" stroke-width=".7"/><path d="M6 4H11M5 6H11M5 8H11M5 10H11" stroke="#666"/></symbol>
<symbol id="pi4" viewBox="0 0 12 12"><path d="M0 3H3" stroke="#444"/><path d="M5 1H11V7H5Z" fill="#ccc" stroke="#444" stroke-width=".8"/><path d="M5 9H11M5 11H11" stroke="#666"/></symbol>
<symbol id="pi5" viewBox="0 0 12 12"><path d="M0 10H3" stroke="#444"/><path d="M5 1H11M5 3H11" stroke="#666"/><path d="M5 5H11V11H5Z" fill="#ccc" stroke="#444" stroke-width=".8"/></symbol>
<symbol id="lst" viewBox="0 0 11 11"><path d="M1 2H10M1 4.500H10M1 7H10M1 9.500H10" stroke="#333" stroke-width="1.100"/></symbol>
<symbol id="grd" viewBox="0 0 11 11"><path d="M1 1.500H3V3.500H1ZM4.500 1.500H6.500V3.500H4.500ZM8 1.500H10V3.500H8ZM1 4.500H3V6.500H1ZM4.500 4.500H6.500V6.500H4.500ZM8 4.500H10V6.500H8ZM1 7.500H3V9.500H1ZM4.500 7.500H6.500V9.500H4.500ZM8 7.500H10V9.500H8Z" fill="#222"/></symbol>
<symbol id="bb1" viewBox="0 0 10 9"><path d="M.5 1V8H3M3 1V8M5 3V8H8" stroke="#444" fill="none"/></symbol>
<symbol id="bb2" viewBox="0 0 10 9"><path d="M2 4 6 1M2 5 6 8M3 4.500H8" stroke="#333" stroke-width="1.300"/></symbol>
<symbol id="bb3" viewBox="0 0 10 9"><path d="M1 8V2H4L5 3H9V8Z" fill="#ccc" stroke="#444"/><circle cx="6" cy="5.500" r="1.500" fill="#777"/></symbol>
<symbol id="bb4" viewBox="0 0 10 9"><path d="M1 1H4V4H1ZM5 1H8V4H5ZM1 5H4V8H1ZM5 5H8V8H5Z" fill="#333"/></symbol>
<symbol id="bb5" viewBox="0 0 10 9"><rect x="1.500" y="1" width="7" height="7" fill="#d8d8d8" stroke="#444"/><path d="M1 3H9M5 3V8" stroke="#444" stroke-width=".6"/></symbol>
<symbol id="bb6" viewBox="0 0 10 9"><path d="M1 8V2H4L5 3H9V8Z" fill="#ccc" stroke="#444"/></symbol>
<symbol id="bb7" viewBox="0 0 10 9"><path d="M2 1H8V8H5V5H2Z" fill="#ccc" stroke="#444"/></symbol>
<symbol id="bb8" viewBox="0 0 10 9"><path d="M2 2H8L7.500 8.500H2.500ZM1 1.500H9M4 .5H6" fill="#555" stroke="#333" stroke-width=".8"/></symbol>
<symbol id="ly1" viewBox="0 0 10 9"><circle cx="4.500" cy="3.500" r="2.500" fill="none" stroke="#777"/><path d="M6.500 5.500 9 8" stroke="#777"/></symbol>
<symbol id="sc1" viewBox="0 0 9 9"><path d="M1 4.500H8M4.500 2V7" stroke="#8a8a8a"/></symbol>
<symbol id="sc2" viewBox="0 0 9 9"><path d="M2 8V2H8M5 8V5H8" stroke="#8a8a8a" fill="none"/></symbol>
<symbol id="sc3" viewBox="0 0 9 9"><path d="M1 7.500H8M3 2V7.500M6 2V7.500" stroke="#8a8a8a" fill="none"/></symbol>
<symbol id="sc4" viewBox="0 0 9 9"><path d="M1 4.500H8M6 3 8 4.500 6 6" stroke="#8a8a8a" fill="none"/></symbol>
</defs></svg>

<div class="shell">
<nav class="menubar d-flex align-items-center">
<svg class="apple" viewBox="0 0 11 13"><path d="M8.200 .3C7.200.4 6.200 1.300 6 2.600 7.100 2.600 8.200 1.600 8.200.3ZM3.300 3.100C1.500 3.100.3 4.600.3 6.600.3 9 2 12.500 3.500 12.500 4.300 12.500 4.700 12 5.700 12 6.600 12 7 12.500 7.900 12.500 9.100 12.500 10.300 10.300 10.700 9 9.200 8.400 8.500 5.800 10.400 4.400 9.700 3.500 8.600 3.100 7.800 3.100 6.800 3.100 6.200 3.600 5.600 3.600 5 3.600 4.300 3.100 3.300 3.100Z" fill="#4a4a4a"/></svg>
<span class="appname">Illustrator CC</span>
<span class="mi">File</span><span class="mi">Edit</span><span class="mi">Object</span><span class="mi">Type</span><span class="mi">Select</span><span class="mi">Effect</span><span class="mi">View</span><span class="mi">Window</span><span class="mi">Help</span>
<svg class="dbx" width="12" height="10" viewBox="0 0 12 10"><path d="M3 0 6 2 3 4 0 2ZM9 0 12 2 9 4 6 2ZM3 4 6 6 3 8 0 6ZM9 4 12 6 9 8 6 6ZM3 8.500 6 6.500 9 8.500 6 10Z" fill="#444"/></svg>
</nav>
<div class="appbar d-flex align-items-center">
<span class="ailogo">Ai</span>
<span class="bridge s2">Br</span><span class="bridge s2">St</span>
<svg class="s3" width="19" height="11" viewBox="0 0 19 11"><rect x=".5" y=".5" width="13" height="10" fill="#bbb" stroke="#444"/><path d="M2 2H6V9H2ZM8 2H12V5H8ZM8 6H12V9H8Z" fill="#444"/><path d="M15 4H19L17 7Z" fill="#222"/></svg>
<svg class="s4" width="14" height="13" viewBox="0 0 14 13"><path d="M13.500.5 1 4 4 6 3 7 6 9 7 8 9 11.500Z" fill="#333"/><path d="M3 9 .5 12M5 10 2 12.500" stroke="#444"/></svg>
</div>
<div class="ctrl d-flex align-items-start">
<div class="nosel">No Selection</div><div class="vsep"></div>
<div class="cmb c24 g1"><span class="sw"></span><span class="arw"></span></div>
<div class="cmb c24 g2"><svg width="14" height="11" viewBox="0 0 20 20" preserveAspectRatio="none"><use href="#slash"/></svg><span class="arw"></span></div>
<span class="lnk g5 lbt">Stroke:</span>
<div class="cmb c60 g2"><span class="spn"></span><span class="arw"></span></div>
<div class="cmb c75 g3 off"><span class="arw"></span></div>
<div class="cmb c74 g3"><span class="val">&nbsp;●&nbsp;&nbsp;5 pt. Round</span><span class="arw"></span></div>
<span class="lnk g3 lbt">Opacity:</span>
<div class="cmb c54 g4"><span class="val">100%</span><span class="arr"></span></div>
<span class="lbl g2 lbt">Style:</span>
<div class="cmb c25 g4"><span class="arw"></span></div>
<div class="vsep g4"></div>
<button class="pbtn g4" type="button">Document Setup</button>
<button class="pbtn g2" type="button">Preferences</button>
<svg class="g7 tolb" width="11" height="11" viewBox="0 0 14 12"><use href="#tol"/></svg>
<span class="g2 arwi"></span>
</div>
<div class="doc">
<div class="dots"><span class="dot"></span><span class="dot d2"></span><span class="dot d3"></span></div>
<div class="doctitle d-flex align-items-center"><svg width="11" height="11" viewBox="0 0 11 11"><rect x=".5" y="1.500" width="10" height="9" fill="#a9714a"/><rect x="3" y="4" width="5.500" height="5" fill="#5b4334"/><rect x="1" y="0" width="4" height="2" fill="#c9a07f"/></svg><span>Sassen Design logo.ai* @ 100% (RGB/GPU Preview)</span></div>
</div>

<main class="desk">
<div class="board"><svg class="logo" viewBox="32 28 460 460"><rect x="32" y="28" width="460" height="460" fill="#231f20"/><path d="M32 405H410V110H114V309H330M197 209H410" fill="none" stroke="#fff" stroke-width="33"/></svg></div>

<!-- tools -->
<section class="pan pan-tools">
<div class="ttl"><span>×</span><span>◂◂</span></div>
<div class="grip"></div>
<div class="tgroup tg0">
<div class="cell act"><svg><use href="#sel"/></svg></div><div class="cell fly"><svg><use href="#dsel"/></svg></div>
<div class="cell"><svg><use href="#wand"/></svg></div><div class="cell"><svg><use href="#lasso"/></svg></div>
</div><div class="tsep"></div>
<div class="tgroup">
<div class="cell fly"><svg><use href="#pen"/></svg></div><div class="cell fly"><svg><use href="#penp"/></svg></div>
<div class="cell fly"><span class="tt">T</span></div><div class="cell fly"><svg><use href="#line"/></svg></div>
<div class="cell fly"><svg><use href="#rect"/></svg></div><div class="cell fly"><svg><use href="#brush"/></svg></div>
<div class="cell fly"><svg><use href="#pencil"/></svg></div><div class="cell fly"><svg><use href="#eraser"/></svg></div>
</div><div class="tsep"></div>
<div class="tgroup tg3">
<div class="cell fly"><svg><use href="#rot"/></svg></div><div class="cell fly"><svg><use href="#scale"/></svg></div>
<div class="cell fly"><svg><use href="#warp"/></svg></div><div class="cell"><svg><use href="#free"/></svg></div>
<div class="cell fly"><svg><use href="#shb"/></svg></div><div class="cell fly"><svg><use href="#per"/></svg></div>
<div class="cell"><svg><use href="#mesh"/></svg></div><div class="cell"><svg><use href="#grad"/></svg></div>
<div class="cell fly"><svg><use href="#drop"/></svg></div><div class="cell"><svg><use href="#blend"/></svg></div>
</div><div class="tsep"></div>
<div class="tgroup">
<div class="cell fly"><svg><use href="#spray"/></svg></div><div class="cell fly"><svg><use href="#graph"/></svg></div>
</div><div class="tsep"></div>
<div class="tgroup tg5">
<div class="cell"><svg><use href="#art"/></svg></div><div class="cell fly"><svg><use href="#slice"/></svg></div>
<div class="cell fly"><svg><use href="#hand"/></svg></div><div class="cell"><svg><use href="#zoom"/></svg></div>
</div>
<div class="proxy">
<div class="pf"></div><div class="ps"><svg viewBox="0 0 20 20" preserveAspectRatio="none"><use href="#slashb"/></svg></div>
<svg class="swp"><use href="#swap"/></svg><svg class="dflt"><use href="#def"/></svg>
</div>
<div class="trio"><span class="tm1"><i></i></span><span><i class="i2"></i></span><span><i class="i3"><svg viewBox="0 0 20 20" preserveAspectRatio="none" width="9" height="9"><use href="#slash"/></svg></i></span></div>
<div class="duo"><span class="tm1"><svg viewBox="0 0 12 12"><use href="#ov1"/></svg></span><span><svg viewBox="0 0 12 12"><use href="#ov2"/></svg></span><span><svg viewBox="0 0 12 12"><use href="#ov3"/></svg></span></div>
<svg class="sm" viewBox="0 0 16 12"><rect x="5" y="1" width="10" height="7" fill="#ddd" stroke="#333"/><rect x="1" y="4" width="10" height="7" fill="#eee" stroke="#333"/></svg>
</section>

<!-- pathfinder -->
<section class="pan pan-path">
<div class="ttl"><span>×</span><span>◂◂</span></div>
<div class="tabs"><span class="tb">Pathfinder</span></div>
<div class="pf-body"><div class="pf-lbl">Shape Modes:</div></div>
<div class="modes"><svg class="ic"><use href="#ov1"/></svg><svg class="ic"><use href="#ov2"/></svg><svg class="ic"><use href="#ov3"/></svg><svg class="ic"><use href="#ov4"/></svg><div class="expand">Expand</div></div>
<div class="pf-body"><div class="pf-lbl pf-lbl2">Pathfinders:</div></div>
<div class="finders"><svg class="ic"><use href="#pf1"/></svg><svg class="ic"><use href="#pf2"/></svg><svg class="ic"><use href="#pf3"/></svg><svg class="ic"><use href="#pf4"/></svg><svg class="ic"><use href="#pf5"/></svg><svg class="ic"><use href="#pf6"/></svg></div>
</section>

<!-- right dock -->
<section class="pan pan-right">
<div class="ttl"><span>×</span><span>◂◂</span></div>
<div class="tabs"><span class="tb"><svg><use href="#ud"/></svg>Color</span></div>
<div class="colbody">
<div class="slrs">
<div class="slr"><span class="slbl">C</span><span class="trk trk-c t1"></span><span></span><span class="fv">69.76</span><span class="pc">%</span></div>
<div class="slr"><span class="slbl">M</span><span class="trk trk-m t2"></span><span></span><span class="fv">67.52</span><span class="pc">%</span></div>
<div class="slr"><span class="slbl">Y</span><span class="trk trk-y t3"></span><span></span><span class="fv">63.86</span><span class="pc">%</span></div>
<div class="slr"><span class="slbl">K</span><span class="trk trk-k t4"></span><span></span><span class="fv">73.96</span><span class="pc">%</span></div>
</div>
<div class="minis"><svg class="ms1"><use href="#def"/></svg><svg class="ms2"><use href="#swap"/></svg><div class="mf"></div><div class="mst"><svg viewBox="0 0 20 20" preserveAspectRatio="none" width="11" height="11"><use href="#slash"/></svg></div>
<svg class="cube" viewBox="0 0 10 10"><path d="M5 0 10 2.500V7.500L5 10 0 7.500V2.500Z" fill="#aaa" stroke="#555"/><path d="M0 2.500 5 5 10 2.500M5 5V10" stroke="#555" fill="none"/></svg><div class="msq"></div></div>
<div class="strip"><i class="st-n"><svg viewBox="0 0 20 20" preserveAspectRatio="none" width="9" height="8"><use href="#slash"/></svg></i><i class="st-k"></i><i class="st-w"></i></div>
<div class="spec"></div><div class="corner"></div>
</div>
<div class="tabs"><span class="tb">Swatches</span></div>
<div class="swbody">
<div class="sfill"></div><div class="sstk"><svg viewBox="0 0 20 20" preserveAspectRatio="none" width="11" height="11"><use href="#slash"/></svg></div>
<div class="vbtn"><span><svg><use href="#lst"/></svg></span><span class="on"><svg><use href="#grd"/></svg></span></div>
<div class="swl"><div class="swg">
<div class="srw"><i class="sn"><svg viewBox="0 0 20 20" preserveAspectRatio="none"><use href="#slash"/></svg></i><i class="c-reg"></i><i class="c-wh"></i><i class="c-bk"></i><i class="x1"></i><i class="x2"></i><i class="x3"></i><i class="x4"></i><i class="x5"></i><i class="x6"></i><i class="x7"></i><i class="x8"></i><i class="x9"></i><i class="x10"></i><i class="x11"></i></div>
<div class="srw"><i class="y1"></i><i class="y2"></i><i class="y3"></i><i class="y4"></i><i class="y5"></i><i class="y6"></i><i class="y7"></i><i class="y8"></i><i class="y9"></i><i class="y10"></i><i class="y11"></i><i class="y12"></i><i class="y13"></i><i class="y14"></i><i class="y15"></i></div>
<div class="srw"><i class="z1"></i><i class="z2"></i><i class="z3"></i><i class="z4"></i><i class="z5"></i><i class="z6"></i><i class="z7"></i><i class="z8"></i><i class="z9"></i><i class="z10"></i><i class="z11"></i><i class="z12"></i><i class="z13"></i><i class="z14"></i><i class="z15"></i></div>
<div class="srw"><i class="p1"></i><i class="p2"></i><i class="p3"></i></div>
<div class="srw sg"><svg class="fold"><use href="#fold"/></svg><i class="g-1"></i><i class="g-2"></i><i class="g-3"></i><i class="g-4"></i><i class="g-5"></i><i class="g-6"></i><i class="g-7"></i><i class="g-8"></i><i class="g-9"></i><i class="g-10"></i><i class="g-11"></i></div>
<div class="srw sg"><svg class="fold"><use href="#fold"/></svg><i class="b-1"></i><i class="b-2"></i><i class="b-3"></i><i class="b-4"></i><i class="b-5"></i><i class="b-6"></i></div>
</div><div class="scr"></div></div>
<div class="swb"><svg><use href="#bb1"/></svg><svg><use href="#bb2"/></svg><svg><use href="#bb3"/></svg><svg><use href="#bb4"/></svg><svg><use href="#bb5"/></svg><svg><use href="#bb6"/></svg><svg><use href="#bb7"/></svg><svg><use href="#bb8"/></svg></div>
<div class="corner"></div>
</div>
<div class="tabs"><span class="tb tbd">Transform</span><span class="tb"><svg><use href="#ud"/></svg>Align</span></div>
<div class="albody">
<div class="al-l">Align Objects:</div>
<div class="al-i"><svg><use href="#al1"/></svg><svg><use href="#al2"/></svg><svg class="sp1"><use href="#al3"/></svg><svg><use href="#al4"/></svg><svg><use href="#al5"/></svg><svg><use href="#al6"/></svg></div>
<div class="al-s"></div>
<div class="al-l">Distribute Objects:</div>
<div class="al-i"><svg><use href="#di1"/></svg><svg><use href="#di2"/></svg><svg class="sp1"><use href="#di3"/></svg><svg><use href="#di4"/></svg><svg><use href="#di5"/></svg><svg><use href="#di6"/></svg></div>
<div class="al-s"></div>
<div class="dsp"><div class="dspl"><div class="al-l">Distribute Spacing:</div><div class="dsr"><svg class="ic"><use href="#ds1"/></svg><svg class="ic"><use href="#ds2"/></svg><div class="cmb off"><span class="spn"></span><span class="val">0 pt</span></div></div></div>
<div class="dspr"><div class="al-l">Align To:</div><svg class="ato" width="16" height="12" viewBox="0 0 16 12"><rect x="2" y="2" width="8" height="8" fill="#ddd" stroke="#333" stroke-dasharray="1 1"/><path d="M12 5H16L14 8Z" fill="#222"/></svg></div></div>
</div>
<div class="tabs"><span class="tb"><svg><use href="#ud"/></svg>Character</span></div>
<div class="chbody">
<div class="tbtn"><svg><use href="#tt"/></svg><span>Touch Type Tool</span></div>
<div class="cmb frow"><span class="val"><svg><use href="#srch"/></svg>Myriad Pro</span><span class="arw"></span></div>
<div class="cmb frow frow2"><span class="val">Regular</span><span class="arw"></span></div>
<div class="hsep"></div>
<div class="cr first"><svg class="ci"><use href="#cs1"/></svg><div class="cmb ca"><span class="spn"></span><span class="val">12 pt</span><span class="arw"></span></div><svg class="ci cb"><use href="#cs2"/></svg><div class="cmb ca"><span class="spn"></span><span class="arw"></span></div></div>
<div class="cr"><svg class="ci"><use href="#cs3"/></svg><div class="cmb ca"><span class="spn"></span><span class="val">Auto</span><span class="arw"></span></div><svg class="ci cb"><use href="#cs4"/></svg><div class="cmb ca"><span class="spn"></span><span class="val">0</span><span class="arw"></span></div></div>
<div class="hsep"></div>
<div class="cr first"><svg class="ci"><use href="#cs5"/></svg><div class="cmb ca"><span class="spn"></span><span class="val">100%</span><span class="arw"></span></div><svg class="ci cb"><use href="#cs6"/></svg><div class="cmb ca"><span class="spn"></span><span class="val">100%</span><span class="arw"></span></div></div>
<div class="cr"><svg class="ci"><use href="#cs7"/></svg><div class="cmb ca"><span class="spn"></span><span class="val">0 pt</span><span class="arw"></span></div><svg class="ci cb"><use href="#cs8"/></svg><div class="cmb ca"><span class="spn"></span><span class="val">0°</span><span class="arw"></span></div></div>
<div class="hsep"></div>
<div class="tsrow"><span>TT</span><span class="tsn">Tт</span><span class="tsw">T¹</span><span class="tsn">T₁</span><span class="tsw"><u>T</u></span><span class="tsn"><s>T</s></span></div>
<div class="hsep"></div>
<div class="lang"><div class="cmb"><span class="val">English: USA</span><span class="arw"></span></div><span class="aa">ªa</span><div class="cmb c61"><span class="val">Sharp</span><span class="arw"></span></div></div>
<div class="grip"></div>
</div>
</section>

<!-- appearance -->
<section class="pan pan-app">
<div class="ttl"><span>×</span></div>
<div class="tabs"><span class="tb">Appearance</span></div>
<div class="apl">
<div class="apr"><div class="apc"><span class="apsq"></span></div><span class="nosl">No Selection</span></div>
<div class="apr"><div class="apc"><svg><use href="#eye"/></svg></div><span class="ape"><span class="tri"></span></span><span class="lnk w30">Stroke:</span><span class="apsw apsn"><svg width="11" height="11" viewBox="0 0 20 20" preserveAspectRatio="none"><use href="#slash"/></svg></span></div>
<div class="apr"><div class="apc"><svg><use href="#eye"/></svg></div><span class="ape"><span class="tri"></span></span><span class="w30">Fill:</span><span class="apsw"><i></i></span><span class="ml10">Overprint</span></div>
<div class="apr"><div class="apc"><svg class="opacity-25"><use href="#eye"/></svg></div><span class="ape"></span><span class="lnk">Opacity:</span><span class="ml3">Default</span></div>
</div>
<div class="apb"><svg viewBox="0 0 10 10"><rect x="1" y="1" width="8" height="8" fill="#ddd" stroke="#222" stroke-width="1.200"/></svg><svg class="m1" viewBox="0 0 10 10"><rect x="1" y="1" width="8" height="8" fill="#555" stroke="#888"/></svg><span class="fx">fx</span><svg class="m3" viewBox="0 0 10 10"><circle cx="5" cy="5" r="3.800" fill="none" stroke="#222" stroke-width="1.200"/><path d="M2.500 2.500 7.500 7.500" stroke="#222"/></svg><svg class="m2 opacity-50" viewBox="0 0 10 9"><use href="#bb7"/></svg><svg class="m2 opacity-50" viewBox="0 0 10 9"><use href="#bb8"/></svg></div>
<div class="grip"></div>
</section>

<!-- stroke + layers -->
<section class="pan pan-stroke">
<div class="ttl"><span>×</span></div>
<div class="tabs"><span class="tb"><svg><use href="#ud"/></svg>Stroke</span></div>
<div class="stbody">
<div class="sr sr0"><span class="srl srd">Weight:</span><div class="cmb wcmb"><span class="spn"></span><span class="arw"></span></div></div>
<div class="sr"><span class="srl">Cap:</span><div class="btg"><span><svg><use href="#sc1"/></svg></span><span><svg><use href="#sc1"/></svg></span><span><svg><use href="#sc1"/></svg></span></div></div>
<div class="sr sr6"><span class="srl">Corner:</span><div class="btg"><span><svg><use href="#sc2"/></svg></span><span><svg><use href="#sc2"/></svg></span><span><svg><use href="#sc2"/></svg></span></div><span class="lim">Limit:</span><span class="limf"></span></div>
<div class="sr"><span class="srl">Align Stroke:</span><div class="btg"><span><svg><use href="#sc3"/></svg></span><span><svg><use href="#sc3"/></svg></span><span><svg><use href="#sc3"/></svg></span></div></div>
<div class="ssep ss6"></div>
<div class="dl"><span class="chk"></span><span class="dlt">Dashed Line</span><span class="dbtn"><svg viewBox="0 0 18 8"><path d="M1 1H5M8 1H12M15 1H17V7H13M10 7H6M3 7H1V3" stroke="#8a8a8a" fill="none"/></svg></span><span class="dbtn"></span></div>
<div class="dfs"><span></span><span></span><span></span><span></span><span></span><span></span></div>
<div class="dls"><span>dash</span><span>gap</span><span>dash</span><span>gap</span><span>dash</span></div>
<div class="ssep ss4"></div>
<div class="sr sr5"><span class="srl">Arrowheads:</span><div class="cmb c43 off"><span class="arw"></span></div><div class="cmb c43 off ar2"><span class="arw"></span></div></div>
<div class="sr sr7"><span class="srl">Scale:</span><div class="cmb c42 off"><span class="spn"></span><span class="val">100%</span></div><div class="cmb c42 off ar2"><span class="spn"></span><span class="val">100%</span></div></div>
<div class="sr sr7"><span class="srl">Align:</span><div class="btg btg2"><span><svg><use href="#sc4"/></svg></span><span><svg><use href="#sc4"/></svg></span></div></div>
<div class="ssep ss5"></div>
<div class="sr sr5"><span class="srl">Profile:</span><div class="cmb c77 off"><span class="arw"></span></div><span class="ic9"></span></div>
</div>
<div class="tabs"><span class="tb">Layers</span></div>
<div class="lbody">
<div class="lyl"><div class="lyr"><div class="lyc"><svg><use href="#eye"/></svg></div><div class="lyc lyc2"></div><span class="lyb"></span><span class="lyt2"><span class="tri"></span></span><span class="lyth"><svg viewBox="32 28 460 460"><path d="M32 405H410V110H114V309H330M197 209H410" fill="none" stroke="#fff" stroke-width="40"/></svg></span><span class="lyn">Layer 1</span></div></div>
<div class="lyf"><span>1 Layer</span><svg><use href="#ly1"/></svg><svg><use href="#bb7"/></svg><svg class="m10"><use href="#bb1"/></svg><svg class="m8"><use href="#bb7"/></svg></div>
<div class="grip2"></div>
</div>
</section>

<!-- paragraph -->
<section class="pan pan-para">
<div class="ttl"><span>×</span><span>◂◂</span></div>
<div class="tabs"><span class="tb"><svg><use href="#ud"/></svg>Paragraph</span></div>
<div class="pabody">
<div class="pal"><span class="on"><svg><use href="#pa1"/></svg></span><span><svg><use href="#pa2"/></svg></span><span><svg><use href="#pa3"/></svg></span><span><svg><use href="#pa4"/></svg></span><span><svg><use href="#pa5"/></svg></span><span><svg><use href="#pa6"/></svg></span><span><svg><use href="#pa7"/></svg></span></div>
<div class="sepa"></div>
<div class="par"><svg><use href="#pi1"/></svg><div class="cmb"><span class="spn"></span><span class="val">0 pt</span></div><svg class="ii"><use href="#pi2"/></svg><div class="cmb"><span class="spn"></span><span class="val">0 pt</span></div></div>
<div class="par"><svg><use href="#pi3"/></svg><div class="cmb"><span class="spn"></span><span class="val">0 pt</span></div></div>
<div class="sepa sepb"></div>
<div class="par"><svg><use href="#pi4"/></svg><div class="cmb"><span class="spn"></span><span class="val">0 pt</span></div><svg class="ii"><use href="#pi5"/></svg><div class="cmb"><span class="spn"></span><span class="val">0 pt</span></div></div>
<div class="sepa sepb"></div>
<div class="hy"><span class="ck"><svg viewBox="0 0 10 10"><path d="M1.500 5 4 8 9 1" fill="none" stroke="#111" stroke-width="1.500"/></svg></span>Hyphenate</div>
</div>
</section>
</main>
</div>
</body></html>
